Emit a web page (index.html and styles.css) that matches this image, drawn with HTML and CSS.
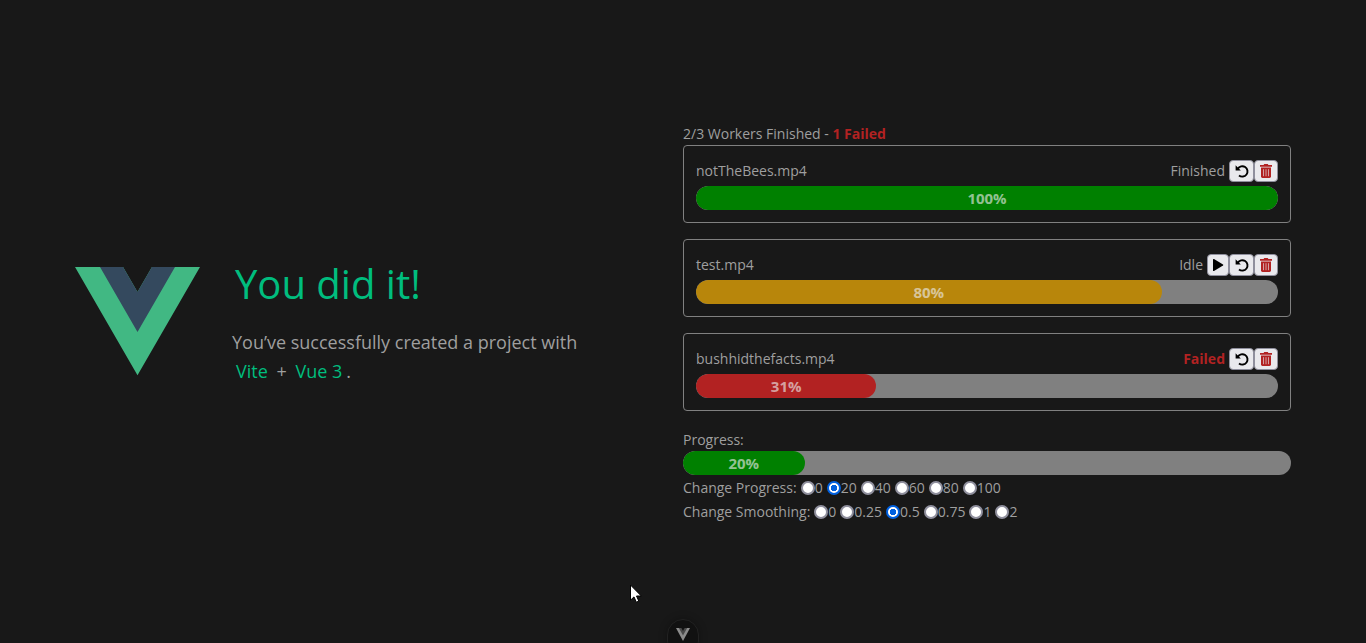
FILE: index.html
```html
<!DOCTYPE html>
<html lang="en">
<head>
<meta charset="utf-8">
<meta name="viewport" content="width=device-width, initial-scale=1">
<title>Workers</title>
<link rel="stylesheet" href="styles.css">
</head>
<body>
<svg class="sprite" aria-hidden="true">
  <symbol id="play" viewBox="0 0 12 14"><path d="M1 1.6Q1 .6 2 1.1L11 6.4Q11.8 7 11 7.6L2 12.9Q1 13.4 1 12.4Z" fill="#000"/></symbol>
  <symbol id="retry" viewBox="0 0 14 14"><path d="M2.8 4.8A5.2 5.2 0 1 1 4 11.4" fill="none" stroke="#000" stroke-width="1.9"/><path d="M.6 1.2V6.4H5.8Z" fill="#000"/></symbol>
  <symbol id="trash" viewBox="0 0 12 14"><path d="M0 1H3.6L4.2 0H7.8L8.4 1H12V2.8H0Z" fill="#b22222"/><path d="M1 3.6H11V12.6Q11 14 9.6 14H2.4Q1 14 1 12.6Z" fill="#b22222"/><path d="M3.5 5.2V12.2M6 5.2V12.2M8.5 5.2V12.2" stroke="#e9e9ed" stroke-width=".8" opacity=".8"/></symbol>
</svg>
<div class="app">
  <header class="intro">
    <svg class="logo" viewBox="0 0 261.76 226.69" role="img" aria-label="Vue logo"><path d="M161.096.001l-30.225 52.351L100.647.001H-.005l130.877 226.688L261.749.001z" fill="#41b883"/><path d="M161.096.001l-30.225 52.351L100.647.001H52.346l78.526 136.01L209.398.001z" fill="#34495e"/></svg>
    <div class="greetings">
      <h1>You did it!</h1>
      <h3>You’ve successfully created a project with <a href="#vite">Vite</a> + <a href="#vue">Vue 3</a>.</h3>
    </div>
  </header>
  <main>
    <div class="summary">2/3 Workers Finished - <strong class="failed">1 Failed</strong></div>
    <section class="worker">
      <div class="worker-head"><span>notTheBees.mp4</span>
        <div class="actions"><span>Finished</span><div class="buttons"><button type="button" aria-label="Retry"><svg class="icon-wide"><use href="#retry"/></svg></button><button type="button" aria-label="Delete"><svg class="icon"><use href="#trash"/></svg></button></div></div>
      </div>
      <div class="bar"><div class="fill" style="width:100%">100%</div></div>
    </section>
    <section class="worker">
      <div class="worker-head"><span>test.mp4</span>
        <div class="actions"><span>Idle</span><div class="buttons"><button class="start" type="button" aria-label="Start"><svg class="icon"><use href="#play"/></svg></button><button type="button" aria-label="Retry"><svg class="icon-wide"><use href="#retry"/></svg></button><button type="button" aria-label="Delete"><svg class="icon"><use href="#trash"/></svg></button></div></div>
      </div>
      <div class="bar"><div class="fill idle" style="width:80%">80%</div></div>
    </section>
    <section class="worker">
      <div class="worker-head"><span>bushhidthefacts.mp4</span>
        <div class="actions"><strong class="failed">Failed</strong><div class="buttons"><button type="button" aria-label="Retry"><svg class="icon-wide"><use href="#retry"/></svg></button><button type="button" aria-label="Delete"><svg class="icon"><use href="#trash"/></svg></button></div></div>
      </div>
      <div class="bar"><div class="fill error" style="width:31%">31%</div></div>
    </section>
    <div class="summary">Progress:</div>
    <div class="bar"><div class="fill" style="width:20%">20%</div></div>
    <div class="options" role="radiogroup" aria-label="Change Progress"><span>Change Progress:</span>
      <label><input type="radio" name="progress">0</label>
      <label><input type="radio" name="progress" checked>20</label>
      <label><input type="radio" name="progress">40</label>
      <label><input type="radio" name="progress">60</label>
      <label><input type="radio" name="progress">80</label>
      <label><input type="radio" name="progress">100</label>
    </div>
    <div class="options" role="radiogroup" aria-label="Change Smoothing"><span>Change Smoothing:</span>
      <label><input type="radio" name="smoothing">0</label>
      <label><input type="radio" name="smoothing">0.25</label>
      <label><input type="radio" name="smoothing" checked>0.5</label>
      <label><input type="radio" name="smoothing">0.75</label>
      <label><input type="radio" name="smoothing">1</label>
      <label><input type="radio" name="smoothing">2</label>
    </div>
  </main>
</div>
<button class="devtools" type="button" aria-label="Toggle devtools"><svg viewBox="0 0 14 13"><path d="M0 0H14L7 13Z" fill="#8c8c8c"/><path d="M2.8 0H11.2L7 7.6Z" fill="#4a4a4a"/><path d="M5.4 0H8.6L7 3Z" fill="#111"/></svg></button>
<svg class="cursor" viewBox="0 0 12 19" aria-hidden="true"><path d="M.5 1V16.2L4 12.9L6.3 18.2L8.8 17.1L6.5 12H11.3Z" fill="#fff" stroke="#000"/></svg>
</body>
</html>
```
FILE: styles.css
```css
*, *::before, *::after { box-sizing: border-box; margin: 0; }
body {
  min-height: 100vh;
  display: flex;
  align-items: center;
  justify-content: center;
  overflow: hidden;
  background: #181818;
  color: #9f9f9f;
  font: 14px/24px "Open Sans", "Noto Sans", sans-serif;
}
.sprite { position: absolute; width: 0; height: 0; }
.app {
  width: 100%;
  max-width: 1280px;
  padding: 0 32px;
  display: grid;
  grid-template-columns: 1fr 1fr;
  align-items: center;
}
.intro { display: flex; align-items: center; padding-right: 80px; }
.logo { width: 125px; flex: none; margin-right: 32px; }
.greetings { flex: 1; }
h1 { font-size: 40px; line-height: 56px; font-weight: 400; color: #00bd7e; margin-bottom: 16px; padding-left: 3px; }
h3 { font-size: 18px; line-height: 29px; font-weight: 400; padding-bottom: 1px; }
a { color: #00bd7e; text-decoration: none; padding: 4px; }
.failed { color: #b22222; font-weight: 700; }
.summary { height: 24px; line-height: 26px; }
.worker { border: 1px solid #808080; border-radius: 4px; padding: 12px; margin-bottom: 16px; }
.worker-head { display: flex; justify-content: space-between; height: 26px; line-height: 26px; margin-bottom: 2px; }
.actions { display: flex; align-items: center; gap: 4px; }
.buttons { display: flex; }
.buttons button {
  height: 22px;
  padding: 0 5px;
  display: flex;
  align-items: center;
  border: 1px solid #8f8f9d;
  border-radius: 4px;
  background: #e9e9ed;
}
.buttons .start { padding: 0 4px; }
.icon { width: 12px; height: 14px; }
.icon-wide { width: 14px; height: 14px; }
.buttons button:has(.icon-wide) { padding: 0 4px 0 5px; }
.bar { height: 24px; border-radius: 12px; background: #808080; overflow: hidden; }
.fill { height: 24px; border-radius: 12px; background: #008000; color: rgba(235, 235, 235, 0.64); font-size: 15px; font-weight: 700; text-align: center; }
.idle { background: #b8860b; }
.error { background: #b22222; }
.options { display: flex; gap: 4px; height: 24px; line-height: 26px; }
.options label { display: flex; align-items: center; height: 26px; }
input[type="radio"] { appearance: none; width: 14px; height: 14px; border: 2px solid #8f8f9d; border-radius: 50%; background: #fff; }
input[type="radio"]:checked { border-color: #0060df; background: radial-gradient(circle, #0060df 0 3px, #fff 3px); }
.devtools {
  position: fixed;
  left: 50%;
  bottom: -14px;
  transform: translateX(-50%);
  display: flex;
  align-items: flex-start;
  justify-content: center;
  width: 32px;
  height: 38px;
  padding: 8px 0;
  border: 1px solid #222;
  border-radius: 16px;
  background: #111;
  box-shadow: 0 0 8px rgba(0, 0, 0, 0.3);
}
.devtools svg { width: 14px; height: 13px; flex: none; }
.cursor { position: absolute; left: 630px; top: 584px; width: 12px; height: 19px; }
```
